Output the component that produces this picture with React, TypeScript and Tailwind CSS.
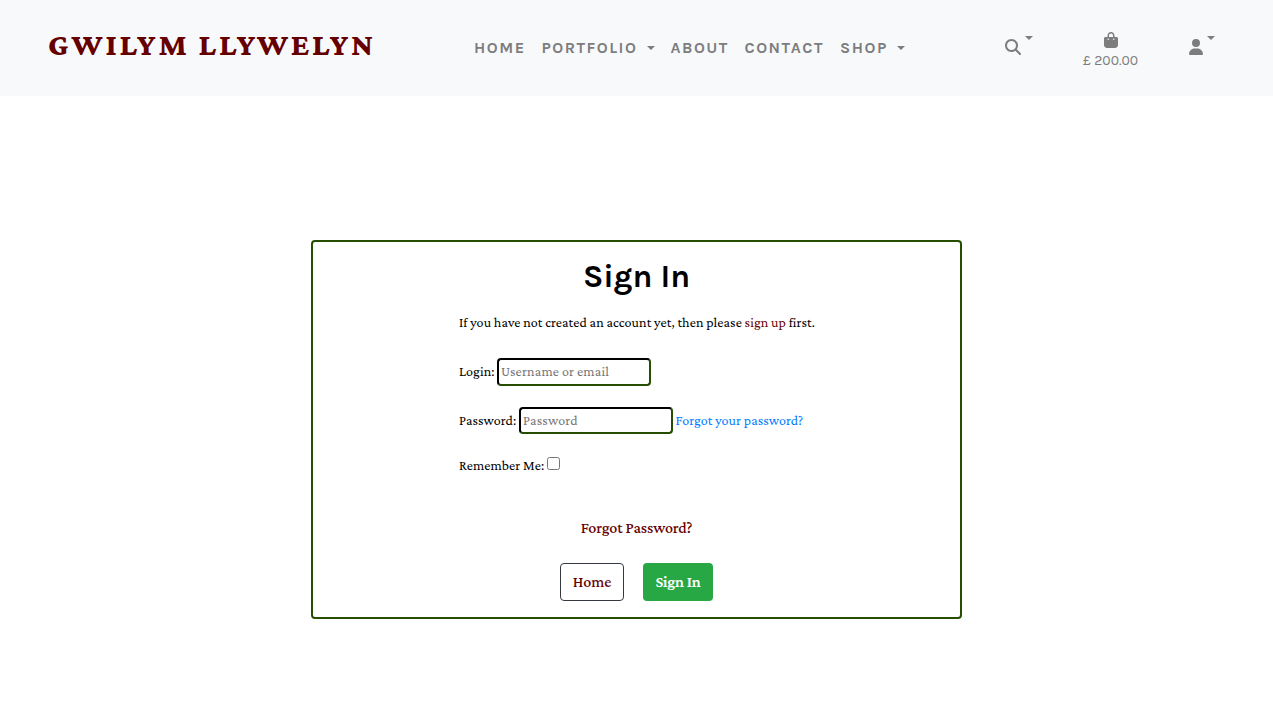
import { FaBagShopping, FaMagnifyingGlass, FaUser } from "react-icons/fa6";

const serif = "font-['Crimson_Pro','Liberation_Serif',serif]";
const sans = "font-['Karla','Roboto',sans-serif]";

function Caret({ className = "" }: { className?: string }) {
  return (
    <span
      className={`inline-block h-0 w-0 border-x-4 border-t-4 border-x-transparent border-t-[#7d7d7e] ${className}`}
    />
  );
}

function Header() {
  return (
    <header className="flex h-24 items-start bg-[#f8f9fb] pl-12 text-[#7d7d7e]">
      <a
        href="#"
        className="mt-6 w-[426px] shrink-0 whitespace-nowrap text-[32px] leading-10 font-extrabold tracking-[2.77px] text-[#660000]"
      >
        GWILYM LLYWELYN
      </a>
      <nav
        className={`${sans} mt-9 flex w-[531px] shrink-0 items-center whitespace-nowrap text-base leading-6 font-bold tracking-[1.5px]`}
      >
        <a href="#" className="w-[67.5px]">HOME</a>
        <a href="#" className="flex w-[129px] items-center">
          <span className="w-[105.5px]">PORTFOLIO</span>
          <Caret className="mb-px" />
        </a>
        <a href="#" className="w-[74px]">ABOUT</a>
        <a href="#" className="w-[95.5px]">CONTACT</a>
        <a href="#" className="flex items-center">
          <span className="w-[57px]">SHOP</span>
          <Caret className="mb-px" />
        </a>
      </nav>
      <a href="#" className="flex w-[78px] shrink-0 items-start pt-9">
        <FaMagnifyingGlass className="mt-[3px] size-4" />
        <Caret className="ml-1" />
      </a>
      <a
        href="#"
        className={`${sans} flex w-[106px] shrink-0 flex-col items-start pt-8`}
      >
        <FaBagShopping className="ml-5 size-4" />
        <span className="mt-1 whitespace-nowrap text-sm leading-[18px]">
          £ 200.00
        </span>
      </a>
      <a href="#" className="flex shrink-0 items-start pt-9">
        <FaUser className="mt-[3px] -ml-px size-4" />
        <Caret className="ml-[3px]" />
      </a>
    </header>
  );
}

const field =
  "w-[154px] rounded border-2 border-t-black border-l-black border-r-[#264d00] border-b-[#264d00] px-0.5 pb-0.5 text-sm tracking-[0.17px] text-black placeholder:text-[#757575] outline-none";

export default function App() {
  return (
    <div className={`${serif} min-h-screen bg-white text-black`}>
      <Header />
      <main className="mx-auto mt-36 flex h-[379px] w-[651px] flex-col items-center rounded border-2 border-[#264d00]">
        <h1
          className={`${sans} mt-4 text-[32px] leading-[38px] font-bold`}
        >
          Sign In
        </h1>
        <form className="mt-4 flex w-[355px] flex-col text-sm leading-5 tracking-[0.07px] whitespace-nowrap">
          <p>
            If you have not created an account yet, then please{" "}
            <a href="#" className="text-[#660000]">sign up</a> first.
          </p>
          <div className="mt-[26px] flex h-7 items-center">
            <label htmlFor="login" className="w-[38px] pb-0.5">Login:</label>
            <input id="login" className={`${field} h-7`} placeholder="Username or email" />
          </div>
          <div className="mt-[21px] flex h-[27px] items-center">
            <label htmlFor="password" className="w-[60px] pb-0.5">Password:</label>
            <input id="password" type="password" className={`${field} h-[27px]`} placeholder="Password" />
            <a href="#" className="ml-[2.5px] pb-0.5 text-[#007bff]">
              Forgot your password?
            </a>
          </div>
          <div className="mt-[21px] flex h-[21px] items-start">
            <label htmlFor="remember" className="w-[88px]">Remember Me:</label>
            <input id="remember" type="checkbox" className="mt-0.5 size-[13px]" />
          </div>
        </form>
        <a href="#" className="mt-10 text-base leading-6 font-medium tracking-[-0.12px] text-[#660000]">
          Forgot Password?
        </a>
        <div className="mt-[23px] flex gap-[19px] text-base whitespace-nowrap">
          <a
            href="#"
            className="flex h-[38px] w-16 items-center justify-center rounded border border-[#343a40] font-medium tracking-[-0.1px] text-[#660000]"
          >
            Home
          </a>
          <button className="flex h-[38px] w-[70px] items-center justify-center rounded bg-[#28a745] font-semibold tracking-[-0.2px] text-white">
            Sign In
          </button>
        </div>
      </main>
    </div>
  );
}
